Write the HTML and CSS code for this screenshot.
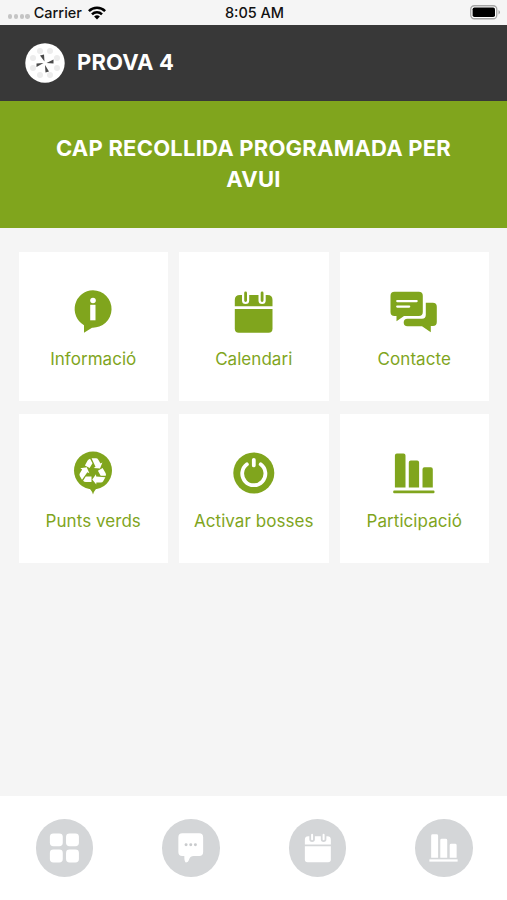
FILE: index.html
```html
<!DOCTYPE html>
<html lang="ca">
<head>
<meta charset="utf-8">
<title>Prova 4</title>
<link rel="stylesheet" href="styles.css">
</head>
<body>
<div class="app">
  <div class="status">
    <div class="carrier">
      <span class="dots"><i></i><i></i><i></i><i></i></span>
      <span class="carrier-name">Carrier</span>
      <svg class="wifi" viewBox="0 0 18 14"><g fill="none" stroke="#000" stroke-width="2.5"><path d="M.9 5.1a11.5 11.5 0 0 1 16.200 0"/><path d="M4 8.300a7.100 7.100 0 0 1 10 0"/></g><path d="M9 13.600l-2.900-3a4.100 4.100 0 0 1 5.800 0z"/></svg>
    </div>
    <span class="time">8:05 AM</span>
    <div class="power">
      <svg class="battery" viewBox="0 0 31 15"><rect x=".75" y=".75" width="26" height="13" rx="3.500" fill="#fff" stroke="#a5a5a5" stroke-width="1.300"/><rect x="2.600" y="2.500" width="22.400" height="9.500" rx="1.800"/><path d="M28.500 5v4.500q1.500-.7 1.500-2.250T28.500 5z" fill="#a5a5a5"/></svg>
    </div>
  </div>
  <header class="header">
    <svg class="logo" viewBox="0 0 40 40"><circle cx="20" cy="20" r="19.700" fill="#fff"/>
      <g fill="#ececec"><circle cx="15" cy="8" r="3"/><circle cx="25" cy="8" r="3"/><circle cx="32" cy="15" r="3"/><circle cx="32" cy="25" r="3"/><circle cx="25" cy="32" r="3"/><circle cx="15" cy="32" r="3"/><circle cx="8" cy="25" r="3"/><circle cx="8" cy="15" r="3"/></g>
      <g fill="#4a4a4a"><path d="M15 12.500l4-1 .5 7z"/><path d="M28.500 16.500v4l-7-.5z"/><path d="M24 28.500l-3.500 1-.5-7.500z"/><path d="M11.500 24v-3.500l7-.5z"/></g></svg>
    <h1 class="title">PROVA 4</h1>
  </header>
  <section class="banner">CAP RECOLLIDA PROGRAMADA PER AVUI</section>
  <main class="grid">
    <a class="card">
      <svg class="icon" viewBox="0 0 48 48"><path d="M24 2.300a18.700 18.700 0 1 1-1 37.380L15 44.800v-7.600A18.700 18.700 0 0 1 24 2.300z"/><g fill="#fff"><circle cx="24" cy="12.500" r="2.800"/><path d="M21.200 16.800h5.300v15.500h-5.300z"/></g></svg>
      <span class="label">Informació</span>
    </a>
    <a class="card">
      <svg class="icon" viewBox="0 0 48 48"><path d="M10 7h2v5.500a3.600 3.600 0 0 0 7.200 0V7h9.300v5.500a3.600 3.600 0 0 0 7.200 0V7h1.800q5 0 5 5v6.300H4.800V12q0-5 5.200-5z"/><path d="M4.800 21h37.700v19.700q0 4-4 4H8.800q-4 0-4-4z"/><path d="M15.600 5v7.500M32.100 5v7.500" stroke="#80a51d" stroke-width="2.800" stroke-linecap="round"/></svg>
      <span class="label">Calendari</span>
    </a>
    <a class="card">
      <svg class="icon" viewBox="0 0 48 48"><path d="M4.500 3.700h24.300q4 0 4 4V24q0 4-4 4H14l-7.500 5.300V28h-2q-4 0-4-4V7.700q0-4 4-4z"/><path d="M35.800 14.700h7q4 0 4 4V34q0 4-4 4h-2v6.300L32 38.300H17.500a3.800 3.800 0 0 1 0-7.600H32q3.800 0 3.800-4z"/><path d="M7.200 13.100h19.500M7.200 18.600h12" stroke="#fff" stroke-width="2.200" stroke-linecap="round"/></svg>
      <span class="label">Contacte</span>
    </a>
    <a class="card">
      <svg class="icon" viewBox="0 0 48 48"><circle cx="24" cy="20.500" r="19"/><path d="M17 36.500h14q-5 1.500-7 8-2-6.500-7-8z"/>
        <g fill="#fff"><g id="arrow"><path d="M22.600 8.300h4.400q1.500 0 2.300 1.400l2.200 3.900 1.900-1-2.400 6-6.400-.6 1.900-1.300z"/><path d="M21.100 8.700l2.400 4.500-2.900 4.900-4.700-2.700 2.700-4.800q.9-1.600 2.500-1.900z"/></g>
        <use href="#arrow" transform="rotate(120 24 21.800)"/><use href="#arrow" transform="rotate(240 24 21.800)"/></g></svg>
      <span class="label">Punts verds</span>
    </a>
    <a class="card">
      <svg class="icon" viewBox="0 0 48 48"><circle cx="23.800" cy="23" r="20.500"/><path d="M16.900 14.300a11.600 11.600 0 1 0 13.800 0M23.800 9.800v5.600" fill="none" stroke="#fff" stroke-width="3.800" stroke-linecap="round"/></svg>
      <span class="label">Activar bosses</span>
    </a>
    <a class="card">
      <svg class="icon" viewBox="0 0 48 48"><path d="M4.900 37.500V5.500q0-2 2-2h6.600q2 0 2 2v32zM18.800 37.500v-25q0-2 2-2h6.300q2 0 2 2v25zM32.500 37.500V19.200q0-2 2-2h6.300q2 0 2 2v18.300z"/><rect x="3.200" y="40.400" width="41.300" height="2.800" rx="1"/></svg>
      <span class="label">Participació</span>
    </a>
  </main>
  <nav class="nav">
    <a class="tab"><svg class="tab-icon" viewBox="0 0 58 58"><g fill="#fff"><rect x="14" y="14.500" width="13" height="13" rx="3.500"/><rect x="30.300" y="14.500" width="13" height="13" rx="3.500"/><rect x="14" y="30.800" width="13" height="13" rx="3.500"/><rect x="30.300" y="30.800" width="13" height="13" rx="3.500"/></g></svg></a>
    <a class="tab"><svg class="tab-icon" viewBox="0 0 58 58"><path d="M20.500 14.300h17q4 0 4 4v15q0 4-4 4H32q-3.500 0-4.500 3-1 3.500-3.500 3.700-1.500-1-1.500-6.700h-2q-4 0-4-4v-15q0-4 4-4z" fill="#fff"/><g fill="#c9cbcd"><circle cx="24.300" cy="26" r="1.500"/><circle cx="29" cy="26" r="1.500"/><circle cx="33.700" cy="26" r="1.500"/></g></svg></a>
    <a class="tab"><svg class="tab-icon" viewBox="0 0 58 58"><g fill="#fff"><path d="M19.500 17.500h1v3a2.800 2.800 0 0 0 5.600 0v-3h6v3a2.800 2.800 0 0 0 5.600 0v-3h1q3.500 0 3.500 3.500v4.700H16V21q0-3.500 3.500-3.500z"/><path d="M16 27.500h26.200V40.800q0 2.700-2.700 2.700h-20.800q-2.700 0-2.700-2.700z"/></g><path d="M23.300 16v4.500M34.900 16v4.500" stroke="#fff" stroke-width="2" stroke-linecap="round"/></svg></a>
    <a class="tab"><svg class="tab-icon" viewBox="0 0 58 58"><g fill="#fff"><path d="M16.300 39V17q0-1.500 1.500-1.500h4q1.500 0 1.500 1.500v22zM25.500 39V21.500q0-1.500 1.500-1.500h4q1.500 0 1.500 1.500V39zM35 39V26.500q0-1.500 1.500-1.500h4q1.500 0 1.500 1.500V39z"/><rect x="14.500" y="40.700" width="28.500" height="2.300"/></g></svg></a>
  </nav>
</div>
</body>
</html>
```

FILE: styles.css
```css
* { box-sizing: border-box; }
body {
  margin: 0;
  font-family: Inter, "Liberation Sans", sans-serif;
  background: #f5f5f5;
}
.app {
  display: flex;
  flex-direction: column;
  width: 507px;
  height: 900px;
}
.status {
  display: grid;
  grid-template-columns: 1fr auto 1fr;
  align-items: center;
  height: 25px;
  padding: 0 6px 0 8px;
  font-size: 14.5px;
  font-weight: 500;
  color: #111;
}
.carrier { display: flex; align-items: center; }
.dots { display: flex; gap: 1.500px; margin: 8px 4px 0 0; }
.dots i { width: 4.300px; height: 4.300px; border-radius: 50%; background: #c4c4c4; }
.wifi { width: 18px; height: 14px; margin-left: 6px; }
.power { display: flex; justify-content: flex-end; }
.battery { width: 31px; height: 15px; }
.header {
  display: flex;
  align-items: center;
  height: 76px;
  padding-left: 25px;
  background: #383838;
}
.logo { width: 40px; height: 40px; }
.title {
  margin: -2px 0 0 12px;
  font-size: 22px;
  line-height: 30px;
  font-weight: 700;
  letter-spacing: 0.15px;
  color: #fff;
}
.banner {
  height: 127px;
  padding: 32px 40px 0;
  background: #80a51d;
  color: #fff;
  font-size: 22px;
  line-height: 31px;
  font-weight: 700;
  letter-spacing: 0.22px;
  text-align: center;
}
.grid {
  flex: 1;
  display: grid;
  grid-template-columns: repeat(3, 1fr);
  grid-auto-rows: 149px;
  gap: 13px 11px;
  padding: 24px 18px 0 18.500px;
}
.card {
  display: flex;
  flex-direction: column;
  align-items: center;
  padding-top: 36px;
  background: #fff;
}
.icon { width: 48px; height: 48px; fill: #80a51d; }
.label {
  margin-top: 12px;
  font-size: 17px;
  line-height: 22px;
  letter-spacing: 0.05px;
  color: #80a51d;
  white-space: nowrap;
}
.nav {
  display: flex;
  justify-content: space-between;
  height: 104px;
  padding: 23px 34.500px 0 35.500px;
  background: #fff;
}
.tab {
  width: 57.500px;
  height: 57.500px;
  border-radius: 50%;
  background: #d4d6d8;
}
.tab-icon { display: block; width: 57.500px; height: 57.500px; }
```
